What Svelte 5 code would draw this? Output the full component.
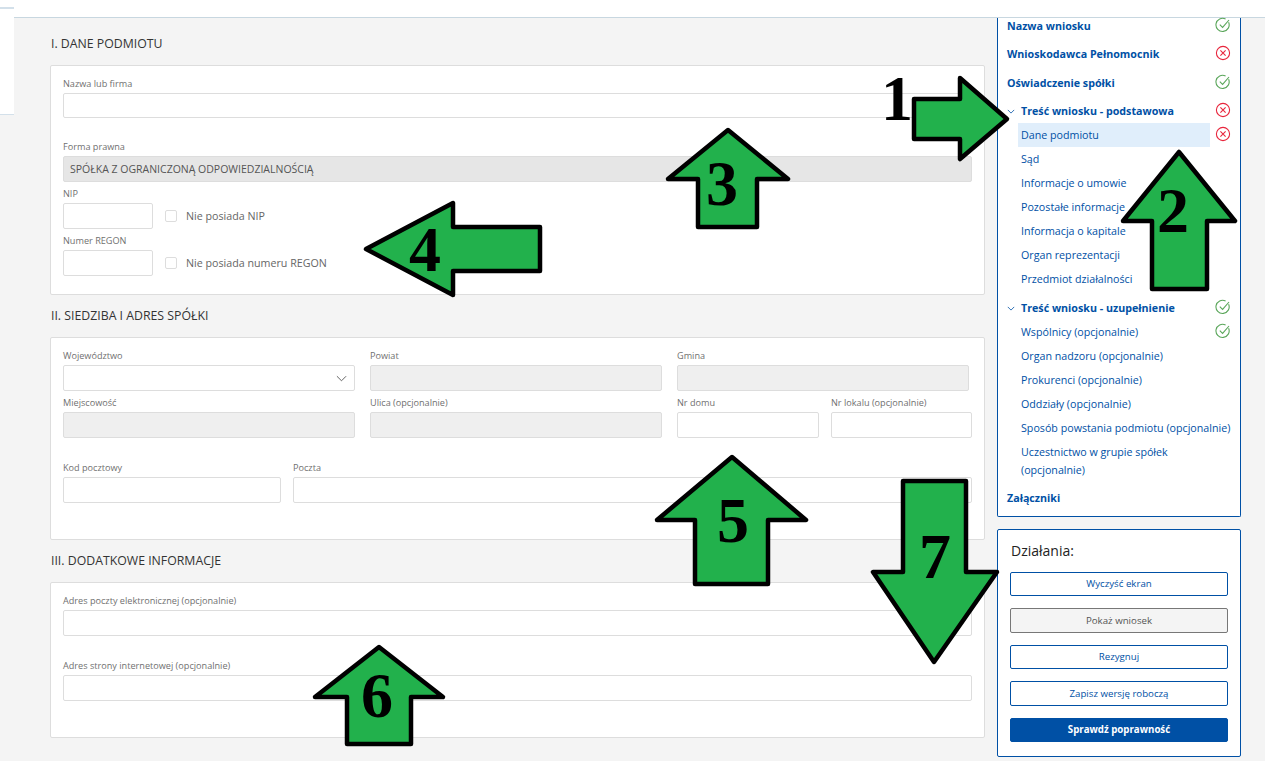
<script>
	const topNav = [
		{ label: 'Nazwa wniosku', status: 'ok' },
		{ label: 'Wnioskodawca Pełnomocnik', status: 'err' },
		{ label: 'Oświadczenie spółki', status: 'ok' }
	];

	const basic = [
		{ label: 'Dane podmiotu', status: 'err', active: true },
		{ label: 'Sąd' },
		{ label: 'Informacje o umowie' },
		{ label: 'Pozostałe informacje' },
		{ label: 'Informacja o kapitale' },
		{ label: 'Organ reprezentacji' },
		{ label: 'Przedmiot działalności' }
	];

	const extra = [
		{ label: 'Wspólnicy (opcjonalnie)', status: 'ok' },
		{ label: 'Organ nadzoru (opcjonalnie)' },
		{ label: 'Prokurenci (opcjonalnie)' },
		{ label: 'Oddziały (opcjonalnie)' },
		{ label: 'Sposób powstania podmiotu (opcjonalnie)' },
		{ label: 'Uczestnictwo w grupie spółek (opcjonalnie)', wrapped: true }
	];

	// numbered annotation arrows painted over the form
	const arrows = [
		{ n: '1', x: 881, y: 120, points: '914,99 960,99 960,78 1007,119 960,159 960,139 914,139' },
		{ n: '2', x: 1157, y: 232, points: '1179,152 1235,221 1207,221 1207,289 1152,289 1152,221 1123,221' },
		{ n: '3', x: 706, y: 205, points: '728,130 788,179 757,179 757,227 698,227 698,179 668,179' },
		{ n: '4', x: 409, y: 271, points: '366,249 453,203 453,227 540,227 540,271 453,271 453,295' },
		{ n: '5', x: 717, y: 542, points: '732,457 806,520 768,520 768,584 695,584 695,520 657,520' },
		{ n: '6', x: 361, y: 717, points: '379,647 443,697 411,697 411,744 347,744 347,697 315,697' },
		{ n: '7', x: 919, y: 578, points: '903,481 966,481 966,572 997,572 934,662 873,572 903,572' }
	];
</script>

{#snippet statusIcon(status)}
	{#if status === 'ok'}
		<svg class="icon ok" viewBox="0 0 16 16" fill="none">
			<path d="M13.6 5.2A6.6 6.6 0 1 1 10.6 2" />
			<path d="M4.8 7.6l2.8 2.8 6.4-7.4" />
		</svg>
	{:else if status === 'err'}
		<svg class="icon err" viewBox="0 0 16 16" fill="none">
			<circle cx="8" cy="8" r="6.6" />
			<path d="M5.4 5.4l5.2 5.2M10.6 5.4l-5.2 5.2" />
		</svg>
	{/if}
{/snippet}

{#snippet chevron()}
	<svg class="chevron" viewBox="0 0 10 6" fill="none"><path d="M1 1l4 4 4-4" /></svg>
{/snippet}

<div class="page">
	<div class="rail"><div class="rail-line"></div></div>

	<div class="column">
		<header class="topbar"></header>

		<div class="content">
			<main class="form">
				<h2>I. Dane podmiotu</h2>
				<section class="card card-one">
					<div class="field">
						<label>Nazwa lub firma</label>
						<div class="input"></div>
					</div>
					<div class="field legal">
						<label>Forma prawna</label>
						<div class="input disabled tall">SPÓŁKA Z OGRANICZONĄ ODPOWIEDZIALNOŚCIĄ</div>
					</div>
					<div class="field short">
						<label>NIP</label>
						<div class="check-row">
							<div class="input small"></div>
							<span class="box"></span>
							<span class="check-text">Nie posiada NIP</span>
						</div>
					</div>
					<div class="field short">
						<label>Numer REGON</label>
						<div class="check-row">
							<div class="input small"></div>
							<span class="box"></span>
							<span class="check-text">Nie posiada numeru REGON</span>
						</div>
					</div>
				</section>

				<h2>II. Siedziba i adres spółki</h2>
				<section class="card card-two">
					<div class="three">
						<div class="field">
							<label>Województwo</label>
							<div class="input select">
								<svg class="select-arrow" viewBox="0 0 12 7" fill="none"><path d="M1 1l5 5 5-5" /></svg>
							</div>
						</div>
						<div class="field">
							<label>Powiat</label>
							<div class="input disabled"></div>
						</div>
						<div class="field">
							<label>Gmina</label>
							<div class="input disabled"></div>
						</div>
					</div>
					<div class="four">
						<div class="field">
							<label>Miejscowość</label>
							<div class="input disabled"></div>
						</div>
						<div class="field">
							<label>Ulica (opcjonalnie)</label>
							<div class="input disabled"></div>
						</div>
						<div class="field">
							<label>Nr domu</label>
							<div class="input"></div>
						</div>
						<div class="field">
							<label>Nr lokalu (opcjonalnie)</label>
							<div class="input"></div>
						</div>
					</div>
					<div class="two">
						<div class="field">
							<label>Kod pocztowy</label>
							<div class="input"></div>
						</div>
						<div class="field">
							<label>Poczta</label>
							<div class="input"></div>
						</div>
					</div>
				</section>

				<h2>III. Dodatkowe informacje</h2>
				<section class="card card-three">
					<div class="field">
						<label>Adres poczty elektronicznej (opcjonalnie)</label>
						<div class="input"></div>
					</div>
					<div class="field second">
						<label>Adres strony internetowej (opcjonalnie)</label>
						<div class="input"></div>
					</div>
				</section>
			</main>

			<aside class="side">
				<nav class="nav">
					{#each topNav as item}
						<div class="nav-top">
							<span>{item.label}</span>
							{@render statusIcon(item.status)}
						</div>
					{/each}

					<div class="nav-top nav-group">
						{@render chevron()}
						<span>Treść wniosku - podstawowa</span>
						{@render statusIcon('err')}
					</div>
					{#each basic as item}
						<div class="nav-sub" class:active={item.active}>
							<span>{item.label}</span>
							{@render statusIcon(item.status)}
						</div>
					{/each}

					<div class="nav-top nav-group">
						{@render chevron()}
						<span>Treść wniosku - uzupełnienie</span>
						{@render statusIcon('ok')}
					</div>
					{#each extra as item}
						<div class="nav-sub" class:wrapped={item.wrapped}>
							<span>{item.label}</span>
							{@render statusIcon(item.status)}
						</div>
					{/each}

					<div class="nav-top nav-last"><span>Załączniki</span></div>
				</nav>

				<div class="actions">
					<h3>Działania:</h3>
					<button>Wyczyść ekran</button>
					<button class="muted">Pokaż wniosek</button>
					<button>Rezygnuj</button>
					<button>Zapisz wersję roboczą</button>
					<button class="primary">Sprawdź poprawność</button>
				</div>
			</aside>
		</div>
	</div>

	<svg class="overlay" viewBox="0 0 1265 761">
		{#each arrows as arrow}
			<polygon points={arrow.points} />
			<text x={arrow.x} y={arrow.y}>{arrow.n}</text>
		{/each}
	</svg>
</div>

<style>
	:global(body) {
		background: #f4f4f4;
	}

	.page {
		position: relative;
		display: flex;
		width: 1265px;
		height: 761px;
		overflow: hidden;
		background: #f4f4f4;
		font-family: 'Open Sans', sans-serif;
		color: #333;
	}

	.rail {
		flex: none;
		width: 14px;
		height: 114px;
		background: white;
		border-bottom: 1px solid #d3e0ea;
	}

	.rail-line {
		height: 2px;
		margin-top: 7px;
		background: #d3e0ea;
	}

	.column {
		flex: 1;
		min-width: 0;
	}

	.topbar {
		height: 17px;
		background: white;
		border-bottom: 1px solid #c8d7e0;
	}

	.content {
		display: flex;
		align-items: flex-start;
	}

	.form {
		flex: none;
		width: 935px;
		margin-left: 36px;
	}

	h2 {
		margin: 12px 0 13px 1px;
		font-size: 12.3px;
		line-height: 17px;
		font-weight: 400;
		text-transform: uppercase;
		color: #333;
	}

	.form h2:first-child {
		margin-top: 17px;
	}

	.card {
		box-sizing: border-box;
		background: white;
		border: 1px solid #ddd;
		border-radius: 2px;
		padding: 12px 12px 0;
	}

	.card-one {
		height: 230px;
	}

	.card-two {
		height: 203px;
	}

	.card-three {
		height: 156px;
	}

	label {
		display: block;
		height: 15px;
		font-size: 9.15px;
		line-height: 12px;
		color: #707070;
	}

	.input {
		box-sizing: border-box;
		height: 25px;
		background: white;
		border: 1px solid #ddd;
		border-radius: 2px;
	}

	.disabled {
		background: #efefef;
	}

	.legal {
		margin-top: 23px;
	}

	.tall {
		height: 26px;
		padding-left: 6px;
		background: #e6e6e6;
		font-size: 10.5px;
		line-height: 24px;
		color: #555;
	}

	.short {
		margin-top: 6px;
	}

	.short + .short {
		margin-top: 6px;
	}

	.check-row {
		display: flex;
		align-items: center;
	}

	.small {
		width: 90px;
		height: 26px;
	}

	.box {
		box-sizing: border-box;
		width: 12px;
		height: 12px;
		margin: 0 9px 0 12px;
		border: 1px solid #ddd;
		border-radius: 2px;
	}

	.check-text {
		margin-bottom: 1px;
		font-size: 10.7px;
		color: #666;
	}

	.three,
	.four {
		display: grid;
		grid-template-columns: 292px 292px 292px;
		column-gap: 15px;
	}

	.three .input,
	.four .input,
	.two .input {
		height: 26px;
	}

	.four {
		grid-template-columns: 292px 292px 142px 138px;
		margin-top: 6px;
	}

	.four .field:last-child {
		margin-left: -3px;
	}

	.two {
		display: grid;
		grid-template-columns: 218px 679px;
		column-gap: 12px;
		margin-top: 24px;
	}

	.second {
		margin-top: 24px;
	}

	.card-three .input {
		height: 26px;
	}

	.select {
		position: relative;
	}

	.select-arrow {
		position: absolute;
		top: 9px;
		right: 7px;
		width: 11px;
		height: 7px;
		stroke: #555;
		stroke-width: 1;
	}

	.side {
		flex: none;
		width: 244px;
		margin-left: 12px;
	}

	.nav {
		box-sizing: border-box;
		height: 499px;
		padding: 0 8px 0 9px;
		background: white;
		border: 1px solid #0050a5;
		border-top: none;
		border-radius: 0 0 2px 2px;
		color: #0050a5;
	}

	.nav-top {
		display: flex;
		align-items: center;
		justify-content: space-between;
		height: 24px;
		margin-top: 4.5px;
		font-size: 10.7px;
		font-weight: 700;
	}

	.nav-top:first-child {
		height: 16px;
		margin-top: 0;
		margin-bottom: 8px;
	}

	.nav-group {
		justify-content: flex-start;
	}

	.nav-sub + .nav-group {
		margin-top: 5px;
	}

	.nav-group span {
		flex: 1;
	}

	.nav-sub + .nav-last {
		margin-top: 7px;
	}

	.chevron {
		width: 8px;
		height: 5px;
		margin-right: 6px;
		stroke: #0050a5;
		stroke-width: 1;
	}

	.nav-sub {
		display: flex;
		align-items: center;
		justify-content: space-between;
		box-sizing: border-box;
		min-height: 24px;
		margin-left: 11px;
		padding: 0 0 0 3px;
		font-size: 10.7px;
		line-height: 18px;
	}

	.nav-sub.wrapped {
		margin-top: 3px;
	}

	.nav-sub.active {
		position: relative;
		background: #e0eefb;
		margin-right: 22px;
	}

	.nav-sub.active .icon {
		position: absolute;
		right: -22px;
	}

	.icon {
		flex: none;
		width: 16px;
		height: 16px;
		margin-right: 1px;
		stroke-width: 1.1;
		transform: translateY(-1px);
	}

	.icon.ok {
		stroke: #5aa65a;
	}

	.icon.err {
		stroke: #e8253c;
	}

	.actions {
		box-sizing: border-box;
		height: 228px;
		margin-top: 12px;
		padding: 11px 12px 0 12px;
		background: white;
		border: 1px solid #0050a5;
		border-radius: 2px;
	}

	h3 {
		margin: 0 0 11.5px 1px;
		font-size: 14px;
		line-height: 19px;
		font-weight: 400;
		color: #222;
	}

	button {
		display: block;
		box-sizing: border-box;
		width: 218px;
		height: 24.5px;
		margin-bottom: 12px;
		padding: 0;
		background: white;
		border: 1px solid #0050a5;
		border-radius: 2px;
		font-family: inherit;
		font-size: 9.7px;
		color: #0050a5;
	}

	button.muted {
		background: #f4f4f4;
		border-color: #777;
		color: #555;
	}

	button.primary {
		background: #0050a5;
		color: white;
		font-weight: 700;
	}

	.overlay {
		position: absolute;
		top: 0;
		left: 0;
		width: 1265px;
		height: 761px;
	}

	.overlay polygon {
		fill: #22b14c;
		stroke: #000;
		stroke-width: 4.5;
		stroke-linejoin: round;
	}

	.overlay text {
		font-family: 'Liberation Serif', serif;
		font-size: 64px;
		font-weight: 700;
		fill: #000;
	}
</style>
